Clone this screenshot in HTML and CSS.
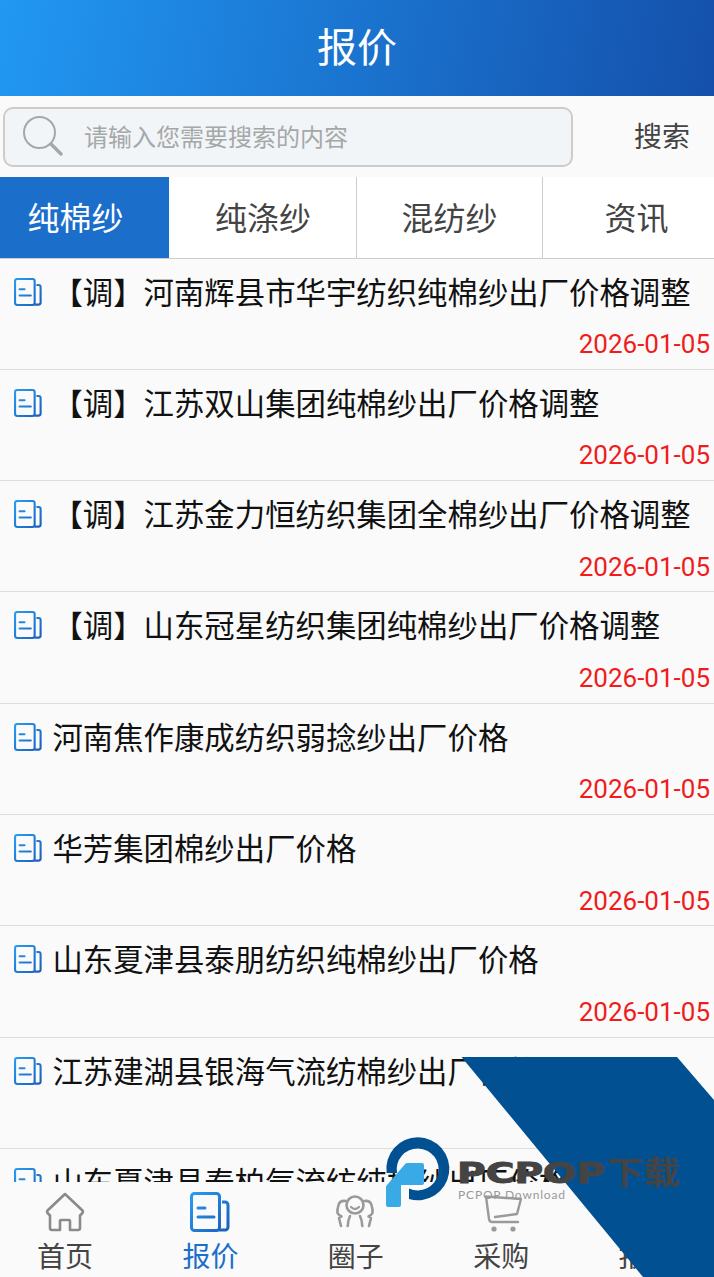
FILE: index.html

```html
<!DOCTYPE html>
<html lang="zh-CN">
<head>
<meta charset="UTF-8">
<title>报价</title>
<link rel="stylesheet" href="styles.css">
</head>
<body>
<svg class="defs" width="0" height="0">
  <defs>
    <linearGradient id="docblue" gradientUnits="userSpaceOnUse" x1="0" y1="0" x2="40" y2="36">
      <stop offset="0" stop-color="#2a9df2"/>
      <stop offset="1" stop-color="#1a5fbd"/>
    </linearGradient>
    <symbol id="doc" viewBox="0 0 40 40">
      <rect x="1.500" y="1.500" width="28" height="37" rx="3" fill="none" stroke="url(#docblue)" stroke-width="3"/>
      <path d="M32 10h3a3 3 0 0 1 3 3v22a3 3 0 0 1-3 3h-6" fill="none" stroke="url(#docblue)" stroke-width="3"/>
      <path d="M8 16h7M8 25h16" fill="none" stroke="url(#docblue)" stroke-width="3" stroke-linecap="round"/>
    </symbol>
  </defs>
</svg>

<header class="top">报价</header>

<div class="searchbar">
  <div class="searchbox">
    <svg class="searchicon" width="42" height="42" viewBox="0 0 42 42">
      <circle cx="17.500" cy="17.500" r="15.500" fill="none" stroke="#a5a8a8" stroke-width="2"/>
      <path d="M29 29l10 10" fill="none" stroke="#a5a8a8" stroke-width="3.500" stroke-linecap="round"/>
    </svg>
    <span class="placeholder">请输入您需要搜索的内容</span>
  </div>
  <span class="searchbtn">搜索</span>
</div>

<nav class="tabs">
  <a class="tab tab-on">纯棉纱</a>
  <a class="tab tab-2">纯涤纱</a>
  <a class="tab tab-3">混纺纱</a>
  <a class="tab tab-4">资讯</a>
</nav>

<main class="list" id="list"></main>

<footer class="bottom">
  <a class="navitem">
    <svg width="44" height="44" viewBox="0 0 44 44">
      <path d="M22 4L4.500 20.500q-1 1.500 .5 3t2 2V38q0 2 2 2h8V31q0-1 1-1h8q1 0 1 1v9h8q2 0 2-2V25.500q.5-.5 2-2t.5-3Z" fill="none" stroke="#8a8a8a" stroke-width="2.600" stroke-linejoin="round"/>
    </svg>
    <span class="navlabel">首页</span>
  </a>
  <a class="navitem navitem-on">
    <svg class="navdoc" width="40" height="40" viewBox="0 0 40 40"><use href="#doc"/></svg>
    <span class="navlabel">报价</span>
  </a>
  <a class="navitem">
    <svg width="44" height="44" viewBox="0 0 44 44">
      <circle cx="21" cy="15" r="8.500" fill="none" stroke="#9a9a9a" stroke-width="2.600"/>
      <path d="M17 17q4 4 8 0" fill="none" stroke="#9a9a9a" stroke-width="2.200" stroke-linecap="round"/>
      <path d="M12 11q-6-1-7.500 4t-1 8q1 2 4 3.500L5 28l2 8M30 11q6-1 7.500 4t1 8q-1 2-4 3.500L37 28l-2 8M16 26q-2 4-2.300 10M26 26q2 4 2.300 10" fill="none" stroke="#9a9a9a" stroke-width="2.600" stroke-linecap="round" stroke-linejoin="round"/>
    </svg>
    <span class="navlabel">圈子</span>
  </a>
  <a class="navitem">
    <svg width="44" height="44" viewBox="0 0 44 44">
      <path d="M7 6.500L42 9 38 24 16 27M7 6.500L10 29q.5 3 3 3H39" fill="none" stroke="#9a9a9a" stroke-width="2.400" stroke-linejoin="round" stroke-linecap="round"/>
      <circle cx="15" cy="39" r="2.600" fill="#9a9a9a"/>
      <circle cx="34" cy="39" r="2.600" fill="#9a9a9a"/>
    </svg>
    <span class="navlabel">采购</span>
  </a>
  <a class="navitem">
    <svg width="44" height="44" viewBox="0 0 44 44"></svg>
    <span class="navlabel">报表</span>
  </a>
</footer>

<svg class="mark" width="714" height="220" viewBox="0 1057 714 220">
  <path d="M461.500 1057H677L714 1100V1277H643Z" fill="#015192"/>
  <path d="M386.600 1173A31.500 31.500 0 1 1 409 1199V1188.500A21 21 0 1 0 397 1173Z" fill="#015192"/>
  <path d="M407 1163H422a2 2 0 0 1 2 2V1183a2 2 0 0 1-2 2H401V1205a2 2 0 0 1-2 2H388a2 2 0 0 1-2-2V1187a2 2 0 0 1 .6-1.400L405.600 1163.600a2 2 0 0 1 1.400-.6Z" fill="#3aaae6"/>
  <text class="mark-big" x="457" y="1183" textLength="148" lengthAdjust="spacingAndGlyphs">PCPOP</text>
  <text class="mark-cjk" x="607" y="1184" textLength="73" lengthAdjust="spacingAndGlyphs">下载</text>
  <text class="mark-small" x="458" y="1199" textLength="107">PCPOP Download</text>
</svg>

<script>
const rows = [
  '【调】河南辉县市华宇纺织纯棉纱出厂价格调整',
  '【调】江苏双山集团纯棉纱出厂价格调整',
  '【调】江苏金力恒纺织集团全棉纱出厂价格调整',
  '【调】山东冠星纺织集团纯棉纱出厂价格调整',
  '河南焦作康成纺织弱捻纱出厂价格',
  '华芳集团棉纱出厂价格',
  '山东夏津县泰朋纺织纯棉纱出厂价格',
  '江苏建湖县银海气流纺棉纱出厂价格',
  '山东夏津县泰柏气流纺纯棉纱出厂价格'
];
const list = document.getElementById('list');
rows.forEach(t => {
  const row = document.createElement('div');
  row.className = 'row';
  row.innerHTML = `
    <div class="row-title">
      <svg class="row-icon" width="28" height="28" viewBox="0 0 40 40"><use href="#doc"/></svg>
      <span class="row-text">${t}</span>
    </div>
    <div class="row-date">2026-01-05</div>
  `;
  list.appendChild(row);
});
</script>
</body>
</html>
```

FILE: styles.css

```css
* {
  box-sizing: border-box;
}
html, body {
  margin: 0;
  height: 1277px;
  overflow: hidden;
}
body {
  display: flex;
  flex-direction: column;
  background: #fafafa;
  color: #111;
  font-family: "Noto Sans CJK SC", "Noto Sans", sans-serif;
  position: relative;
}
.defs {
  position: absolute;
}
.top {
  height: 96px;
  flex: none;
  display: flex;
  align-items: center;
  justify-content: center;
  padding-bottom: 7px;
  background: linear-gradient(100deg, #2198f3, #1450ab);
  color: #fff;
  font-size: 40px;
}
.searchbar {
  height: 81px;
  flex: none;
  display: flex;
  align-items: flex-start;
  padding: 11px 0 0 3px;
}
.searchbox {
  width: 570px;
  height: 60px;
  display: flex;
  align-items: center;
  padding-left: 17px;
  background: #f2f5f7;
  border: 2px solid #ccc;
  border-radius: 10px;
}
.searchicon {
  flex: none;
  margin-bottom: 3px;
}
.placeholder {
  margin: 0 0 4px 20px;
  font-size: 24px;
  color: #a5a8a8;
}
.searchbtn {
  margin-left: 61px;
  font-size: 28px;
  line-height: 56px;
  color: #444;
}
.tabs {
  height: 81.5px;
  flex: none;
  display: flex;
  background: #fff;
  border-bottom: 1.5px solid #ccc;
}
.tab {
  display: flex;
  align-items: center;
  justify-content: center;
  padding-bottom: 2px;
  font-size: 32px;
  color: #444;
  border-right: 1px solid #ccc;
}
.tab-on {
  width: 170px;
  padding-right: 18px;
  background: #1c6ecb;
  color: #fff;
  border-right: 1px solid #fff;
}
.tab-2 {
  width: 187px;
}
.tab-3 {
  width: 186px;
}
.tab-4 {
  flex: 1;
  padding-left: 16px;
  border-right: 0;
}
.list {
  flex: 1;
  min-height: 0;
  overflow: hidden;
}
.row {
  height: 111.33px;
  padding: 11px 4px 0 14px;
  border-bottom: 1.5px solid #ddd;
}
.row-title {
  display: flex;
  align-items: center;
  height: 44px;
  font-size: 30.4px;
  white-space: nowrap;
}
.row-icon {
  flex: none;
  margin-right: 11px;
}
.row-text {
  margin: 0 0 2px -0.6px;
}
.row-date {
  margin-top: 8.5px;
  text-align: right;
  font-family: Roboto, sans-serif;
  font-size: 26px;
  line-height: 44px;
  color: #f01c1c;
}
.bottom {
  height: 95px;
  flex: none;
  display: flex;
  gap: 15.4px;
  background: #fafafa;
}
.navitem {
  width: 130px;
  display: flex;
  flex-direction: column;
  align-items: center;
  padding-top: 8px;
  font-size: 28px;
  line-height: 40px;
  color: #444;
}
.navlabel {
  margin-top: 1px;
}
.navdoc {
  margin: 2px 0;
}
.navitem-on {
  color: #1c6ecb;
}
.mark {
  position: absolute;
  left: 0;
  bottom: 0;
}
.mark-big {
  font-family: "DejaVu Sans", sans-serif;
  font-weight: 700;
  font-size: 29px;
  fill: #444;
  stroke: #444;
  stroke-width: 1px;
}
.mark-cjk {
  font-weight: 700;
  font-size: 32px;
  fill: #444;
}
.mark-small {
  font-family: Lato, sans-serif;
  font-size: 12px;
  fill: #999;
}
```
